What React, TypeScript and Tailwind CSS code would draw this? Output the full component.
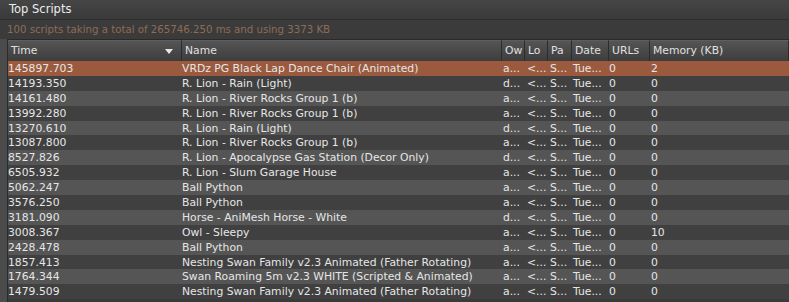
import React from "react";

type Row = { time: string; name: string; owner: string; mem: string };

const rows: Row[] = [
  { time: "145897.703", name: "VRDz PG Black Lap Dance Chair (Animated)", owner: "a", mem: "2" },
  { time: "14193.350", name: "R. Lion - Rain (Light)", owner: "d", mem: "0" },
  { time: "14161.480", name: "R. Lion - River Rocks Group 1 (b)", owner: "a", mem: "0" },
  { time: "13992.280", name: "R. Lion - River Rocks Group 1 (b)", owner: "a", mem: "0" },
  { time: "13270.610", name: "R. Lion - Rain (Light)", owner: "d", mem: "0" },
  { time: "13087.800", name: "R. Lion - River Rocks Group 1 (b)", owner: "a", mem: "0" },
  { time: "8527.826", name: "R. Lion - Apocalypse Gas Station (Decor Only)", owner: "d", mem: "0" },
  { time: "6505.932", name: "R. Lion - Slum Garage House", owner: "a", mem: "0" },
  { time: "5062.247", name: "Ball Python", owner: "a", mem: "0" },
  { time: "3576.250", name: "Ball Python", owner: "a", mem: "0" },
  { time: "3181.090", name: "Horse - AniMesh Horse - White", owner: "d", mem: "0" },
  { time: "3008.367", name: "Owl - Sleepy", owner: "a", mem: "10" },
  { time: "2428.478", name: "Ball Python", owner: "a", mem: "0" },
  { time: "1857.413", name: "Nesting Swan Family v2.3 Animated (Father Rotating)", owner: "a", mem: "0" },
  { time: "1764.344", name: "Swan Roaming 5m v2.3 WHITE (Scripted & Animated)", owner: "a", mem: "0" },
  { time: "1479.509", name: "Nesting Swan Family v2.3 Animated (Father Rotating)", owner: "a", mem: "0" },
];

const cols = "grid grid-cols-[174px_320px_23px_23px_24px_37px_41px_1fr]";

function HeaderCell({ children, arrow }: { children: React.ReactNode; arrow?: boolean }) {
  return (
    <div className="relative flex items-center pl-[3px] bg-gradient-to-b from-[#555555] to-[#3d3d3d] border-r border-[#2c2c2c] border-t border-t-[#5e5e5e] whitespace-nowrap">
      {children}
      {arrow && (
        <svg className="absolute right-[8px] top-[8px]" width="8" height="5" viewBox="0 0 8 5">
          <path d="M0 0 L8 0 L4 5 Z" fill="#e8e8e8" />
        </svg>
      )}
    </div>
  );
}

export default function App() {
  return (
    <div
      className="w-[789px] h-[302px] overflow-hidden bg-[#4b4b4b] text-[#e6e6e6] flex flex-col"
      style={{ fontFamily: '"DejaVu Sans", "Liberation Sans", sans-serif' }}
    >
      <div className="h-[20px] shrink-0 flex items-center pl-[9px] bg-gradient-to-b from-[#464646] to-[#3a3a3a] border-b border-[#2e2e2e] text-[11.5px] text-[#ececec]">
        Top Scripts
      </div>
      <div className="h-[19px] shrink-0 flex items-center pl-[7px] bg-[#3b3b3b] text-[10.2px] text-[#8f6c55]">
        100 scripts taking a total of 265746.250 ms and using 3373 KB
      </div>
      <div className="ml-[7px] flex-1 flex flex-col border-l border-t border-[#2a2a2a] bg-[#3a3a3a]">
        <div className={`${cols} h-[21px] shrink-0 text-[10.8px] text-[#e0e0e0]`}>
          <HeaderCell arrow>Time</HeaderCell>
          <HeaderCell>Name</HeaderCell>
          <HeaderCell>Ow</HeaderCell>
          <HeaderCell>Lo</HeaderCell>
          <HeaderCell>Pa</HeaderCell>
          <HeaderCell>Date</HeaderCell>
          <HeaderCell>URLs</HeaderCell>
          <HeaderCell>Memory (KB)</HeaderCell>
        </div>
        {rows.map((r, i) => {
          const bg = i === 0 ? "bg-[#9b5a3d]" : i % 2 === 1 ? "bg-[#404040]" : "bg-[#555555]";
          return (
            <div
              key={i}
              className={`${cols} h-[14.9px] shrink-0 items-center text-[10.8px] leading-[13px] whitespace-nowrap ${bg}`}
            >
              <div>{r.time}</div>
              <div>{r.name}</div>
              <div className="pl-[1px]">{r.owner}...</div>
              <div className="pl-[2px]">&lt;...</div>
              <div className="pl-[2px]">S...</div>
              <div className="pl-[1px]">Tue...</div>
              <div>0</div>
              <div className="pl-[1px]">{r.mem}</div>
            </div>
          );
        })}
      </div>
    </div>
  );
}
